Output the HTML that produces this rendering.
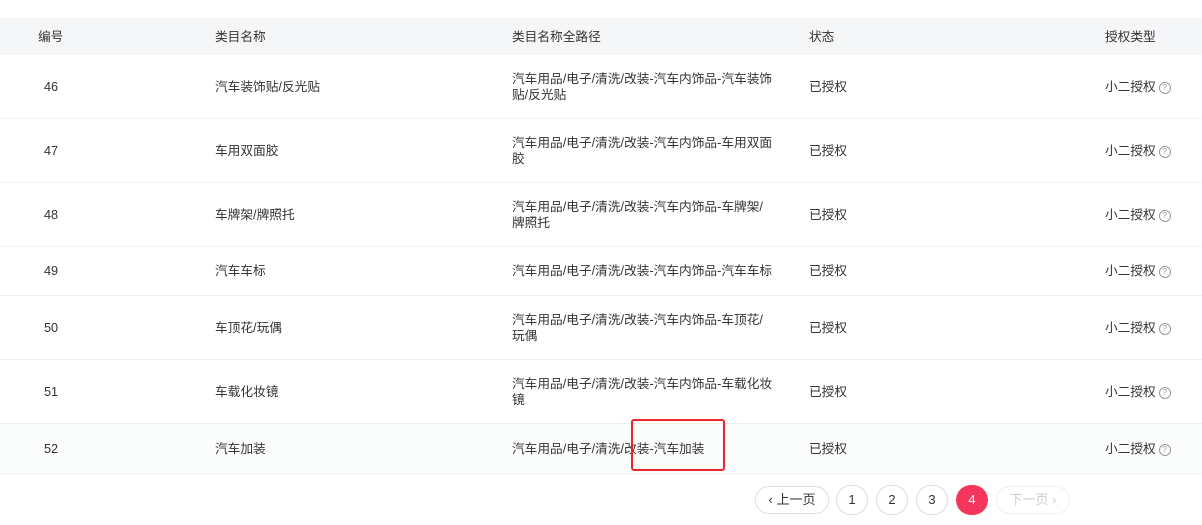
<!DOCTYPE html>
<html><head><meta charset="utf-8"><style>
body{margin:0;width:1202px;height:525px;background:#fff;font-family:"Liberation Sans","Noto Sans CJK SC",sans-serif;font-size:12.7px;color:#333;position:relative;overflow:hidden}
.row{position:absolute;left:0;width:1202px;border-bottom:1px solid #eef0f2;box-sizing:border-box}
.c{position:absolute;top:50%;transform:translateY(-50%);line-height:16px}
.hd{background:#f5f6f8;border:none}
.q{display:inline-block;width:10px;height:10px;border:1px solid #999;border-radius:50%;font-size:8px;line-height:10px;text-align:center;color:#999;vertical-align:1px;margin-left:3px}
.pg{position:absolute;top:486px;height:28px;border:1px solid #ddd;border-radius:15px;box-sizing:border-box;text-align:center;line-height:26px;font-size:13px;color:#333}
.w{width:264px;word-break:break-all}
</style></head><body>
<div class="row hd" style="top:18px;height:37px">
<span class="c" style="left:38px">编号</span><span class="c" style="left:215px">类目名称</span><span class="c" style="left:512px">类目名称全路径</span><span class="c" style="left:809px">状态</span><span class="c" style="left:1105px">授权类型</span></div>

<div class="row" style="top:55px;height:64px"><span class="c" style="left:44px">46</span><span class="c" style="left:215px">汽车装饰贴/反光贴</span><span class="c w" style="left:512px">汽车用品/电子/清洗/改装-汽车内饰品-汽车装饰<br>贴/反光贴</span><span class="c" style="left:809px">已授权</span><span class="c" style="left:1105px">小二授权<span class="q">?</span></span></div>
<div class="row" style="top:119px;height:64px"><span class="c" style="left:44px">47</span><span class="c" style="left:215px">车用双面胶</span><span class="c w" style="left:512px">汽车用品/电子/清洗/改装-汽车内饰品-车用双面<br>胶</span><span class="c" style="left:809px">已授权</span><span class="c" style="left:1105px">小二授权<span class="q">?</span></span></div>
<div class="row" style="top:183px;height:64px"><span class="c" style="left:44px">48</span><span class="c" style="left:215px">车牌架/牌照托</span><span class="c w" style="left:512px">汽车用品/电子/清洗/改装-汽车内饰品-车牌架/<br>牌照托</span><span class="c" style="left:809px">已授权</span><span class="c" style="left:1105px">小二授权<span class="q">?</span></span></div>
<div class="row" style="top:247px;height:49px"><span class="c" style="left:44px">49</span><span class="c" style="left:215px">汽车车标</span><span class="c" style="left:512px;white-space:nowrap">汽车用品/电子/清洗/改装-汽车内饰品-汽车车标</span><span class="c" style="left:809px">已授权</span><span class="c" style="left:1105px">小二授权<span class="q">?</span></span></div>
<div class="row" style="top:296px;height:64px"><span class="c" style="left:44px">50</span><span class="c" style="left:215px">车顶花/玩偶</span><span class="c w" style="left:512px">汽车用品/电子/清洗/改装-汽车内饰品-车顶花/<br>玩偶</span><span class="c" style="left:809px">已授权</span><span class="c" style="left:1105px">小二授权<span class="q">?</span></span></div>
<div class="row" style="top:360px;height:64px"><span class="c" style="left:44px">51</span><span class="c" style="left:215px">车载化妆镜</span><span class="c w" style="left:512px">汽车用品/电子/清洗/改装-汽车内饰品-车载化妆<br>镜</span><span class="c" style="left:809px">已授权</span><span class="c" style="left:1105px">小二授权<span class="q">?</span></span></div>
<div class="row" style="top:424px;height:50px;background:#fbfdfc"><span class="c" style="left:44px">52</span><span class="c" style="left:215px">汽车加装</span><span class="c" style="left:512px">汽车用品/电子/清洗/改装-汽车加装</span><span class="c" style="left:809px">已授权</span><span class="c" style="left:1105px">小二授权<span class="q">?</span></span></div>
<div style="position:absolute;left:631px;top:419px;width:94px;height:52px;border:2px solid #e8262b;border-radius:3px;box-sizing:border-box"></div>

<div class="pg" style="left:755px;width:74px">‹ 上一页</div>
<div class="pg" style="left:836px;width:32px;height:30px;top:485px;line-height:28px">1</div>
<div class="pg" style="left:876px;width:32px;height:30px;top:485px;line-height:28px">2</div>
<div class="pg" style="left:916px;width:32px;height:30px;top:485px;line-height:28px">3</div>
<div class="pg" style="left:956px;width:32px;height:30px;top:485px;line-height:30px;background:#f5365c;border:none;color:#fff">4</div>
<div class="pg" style="left:996px;width:74px;color:#ccc;border-color:#eee">下一页 ›</div>
</body></html>
